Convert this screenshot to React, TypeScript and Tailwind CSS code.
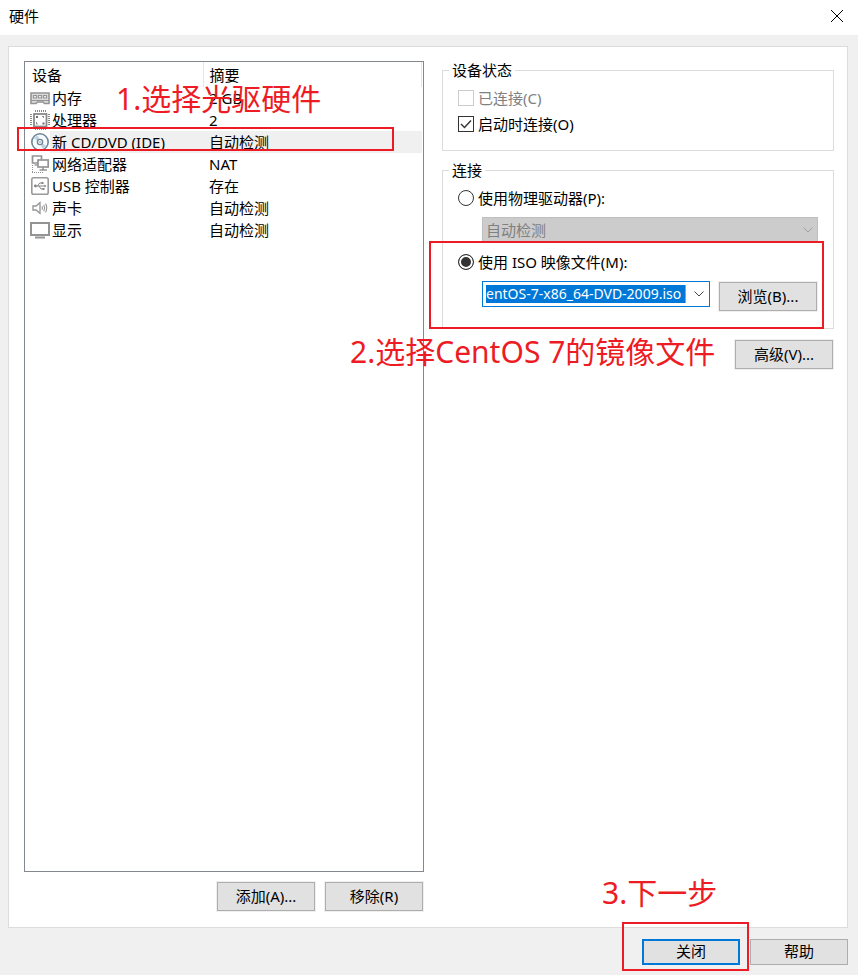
import type { ReactNode, SVGProps } from 'react';

function MemoryIcon() {
  return (
    <svg width="20" height="20" viewBox="0 0 20 20" fill="none" stroke="#949494" aria-hidden="true">
      <path d="M1 5h18v10.5h-4.5L13 14H7.5L6 15.5H1z" fill="#dcdcdc" strokeWidth="1.6" />
      <path d="M1 12.5h18" />
      <path d="M3.5 7.5h3v2.5h-3zM8.5 7.5h3v2.5h-3zM13.5 7.5h3v2.5h-3z" fill="#f4f4f4" strokeWidth="1.2" />
    </svg>
  );
}

function CpuIcon() {
  return (
    <svg width="20" height="20" viewBox="0 0 20 20" fill="none" stroke="#8a8a8a" aria-hidden="true">
      <path d="M5.5 0v2M7.5 0v2M9.5 0v2M11.5 0v2M13.5 0v2M15.5 0v2" />
      <path d="M5.5 18v2M7.5 18v2M9.5 18v2M11.5 18v2M13.5 18v2M15.5 18v2" />
      <path d="M0 4.5h2M0 6.5h2M0 8.5h2M0 10.5h2M0 12.5h2M0 14.5h2" />
      <path d="M18 4.5h2M18 6.5h2M18 8.5h2M18 10.5h2M18 12.5h2M18 14.5h2" />
      <rect x="4" y="4" width="12.5" height="12.5" strokeWidth="1.8" fill="#fff" />
      <path d="M6 6h2v2H6zM12.5 12.5h2v2h-2z" fill="#6c6c6c" stroke="none" />
      <path d="M12 6.5h2M13.5 6v2M6.5 12v2M6 14h2" strokeWidth=".9" />
    </svg>
  );
}

function DiscIcon() {
  return (
    <svg width="20" height="20" viewBox="0 0 20 20" fill="none" stroke="#6b8799" aria-hidden="true">
      <circle cx="10" cy="10" r="8.2" strokeWidth="1.6" fill="#f7fbfd" />
      <path d="M10 10 4 6.5A7 7 0 0 1 8 3.4zM10 10l6 3.5a7 7 0 0 1-4 3.1z" fill="#bcd3e2" stroke="none" />
      <circle cx="10" cy="10" r="2.6" strokeWidth="1.4" fill="#fff" />
      <circle cx="10" cy="10" r=".8" fill="#6b8799" stroke="none" />
    </svg>
  );
}

function NetworkIcon() {
  return (
    <svg width="20" height="20" viewBox="0 0 20 20" fill="none" stroke="#949494" aria-hidden="true">
      <path d="M8 9H2.5V2h9v3.5" strokeWidth="1.7" />
      <path d="M4.5 11h3" strokeWidth="1.4" />
      <rect x="8" y="6" width="10.2" height="7" strokeWidth="1.7" fill="#fff" />
      <path d="M13 13v3M9.5 16h7.5" strokeWidth="1.6" />
      <path d="M2.5 11v7M2 18.5h12" strokeDasharray="1 1" />
    </svg>
  );
}

function UsbIcon() {
  return (
    <svg width="20" height="20" viewBox="0 0 20 20" fill="none" stroke="#9a9a9a" aria-hidden="true">
      <rect x="1.8" y="1.8" width="16.4" height="16.4" rx="1.8" strokeWidth="1.6" />
      <path d="M6 10h9M7.5 10 9.7 7H12M9 10l2 3h2" stroke="#858585" />
      <circle cx="5.4" cy="10" r="1.4" fill="#858585" stroke="none" />
      <path d="M11.5 6h2v2h-2zM12.5 12h2v2h-2zM14.5 8.5l2 1.5-2 1.5z" fill="#858585" stroke="none" />
    </svg>
  );
}

function SoundIcon() {
  return (
    <svg width="20" height="20" viewBox="0 0 20 20" fill="none" stroke="#949494" strokeWidth="1.3" aria-hidden="true">
      <path d="M3 8h3l4-3.3v10.6L6 12H3z" />
      <path d="M12 8.3q.8 1.7 0 3.4M13.8 6.8q1.6 3.2 0 6.4M15.6 5.5q2.2 4.5 0 9" strokeWidth="1.1" />
    </svg>
  );
}

function DisplayIcon() {
  return (
    <svg width="20" height="20" viewBox="0 0 20 20" fill="none" stroke="#949494" aria-hidden="true">
      <rect x="1" y="3" width="18" height="12" strokeWidth="2" />
      <path d="M5 17.5h10" strokeWidth="2" />
    </svg>
  );
}

function Chevron(props: SVGProps<SVGSVGElement>) {
  return (
    <svg width="10" height="6" viewBox="0 0 10 6" fill="none" stroke="currentColor" aria-hidden="true" {...props}>
      <path d="M.5.5 5 5 9.5.5" />
    </svg>
  );
}

const devices = [
  { name: '内存', summary: '2 GB', Icon: MemoryIcon },
  { name: '处理器', summary: '2', Icon: CpuIcon },
  { name: '新 CD/DVD (IDE)', summary: '自动检测', Icon: DiscIcon, selected: true },
  { name: '网络适配器', summary: 'NAT', Icon: NetworkIcon },
  { name: 'USB 控制器', summary: '存在', Icon: UsbIcon },
  { name: '声卡', summary: '自动检测', Icon: SoundIcon },
  { name: '显示', summary: '自动检测', Icon: DisplayIcon },
];

function PushButton({ children, className = 'h-[29px] border border-[#adadad] shadow-[0_0_0_1px_#f0f0f0]' }: { children: ReactNode; className?: string }) {
  return (
    <button type="button" className={`w-[98px] shrink-0 bg-[#e1e1e1] pb-0.5 leading-5 ${className}`}>
      {children}
    </button>
  );
}

function Group({ title, children, className }: { title: string; children: ReactNode; className: string }) {
  return (
    <fieldset className={`min-w-0 border border-[#dcdcdc] pr-[15px] pl-[15px] pt-1.5 ${className}`}>
      <legend className="-ml-[9px] h-[18px] px-[3px] leading-[18px]">{title}</legend>
      {children}
    </fieldset>
  );
}

function Note({ children, className }: { children: ReactNode; className: string }) {
  return (
    <p className={`pointer-events-none absolute z-10 text-[30px] leading-10 whitespace-nowrap text-[#ed1c24] ${className}`}>
      {children}
    </p>
  );
}

function Frame({ className }: { className: string }) {
  return <div className={`pointer-events-none absolute z-10 border-2 border-[#ed1c24] ${className}`} />;
}

const check = 'size-4 shrink-0 appearance-none border border-[#333] bg-white disabled:border-[#ccc]';
const radio =
  'size-4 shrink-0 appearance-none rounded-full border border-[#333] bg-white checked:bg-[#333] checked:shadow-[inset_0_0_0_2px_#fff]';

export default function App() {
  return (
    <div className="flex min-h-screen flex-col bg-[#f0f0f0] font-['Noto_Sans','Noto_Sans_CJK_SC',sans-serif] text-[15px] text-black">
      <header className="flex h-[35px] items-center justify-between bg-white pr-[15px] pl-[9px]">
        <h1 className="pb-1 leading-5">硬件</h1>
        <button type="button" aria-label="关闭窗口" className="pb-1">
          <svg width="12" height="12" viewBox="0 0 12 12" fill="none" stroke="#000" aria-hidden="true">
            <path d="m0 0 12 12M12 0 0 12" />
          </svg>
        </button>
      </header>

      <main className="mt-[11px] mr-2.5 ml-2 flex flex-1 gap-[18px] border border-[#dcdcdc] bg-white pt-3.5 pr-[13px] pb-4 pl-[15px]">
        <section className="relative flex w-[400px] shrink-0 flex-col">
          <div className="flex-1 border border-[#828790] pr-px">
            <table className="w-full table-fixed border-collapse text-left leading-[22px]">
              <colgroup>
                <col className="w-[25px]" />
                <col className="w-[153px]" />
                <col />
              </colgroup>
              <thead>
                <tr className="h-[25px]">
                  <th colSpan={2} className="border-r border-[#e5e5e5] p-0 pl-[7px] font-normal">设备</th>
                  <th className="border-r border-[#e5e5e5] p-0 pl-1.5 font-normal">摘要</th>
                </tr>
              </thead>
              <tbody>
                {devices.map(({ name, summary, Icon, selected }) => (
                  <tr key={name} className="h-[22px]">
                    <td className="p-0 pl-[5px]"><Icon /></td>
                    <td className={`p-0 pl-0.5 whitespace-nowrap ${selected ? 'bg-[#f0f0f0]' : ''}`}>{name}</td>
                    <td className={`p-0 pl-1.5 ${selected ? 'bg-[#f0f0f0]' : ''}`}>{summary}</td>
                  </tr>
                ))}
              </tbody>
            </table>
          </div>
          <div className="mt-2.5 flex justify-end gap-2.5 pr-px">
            <PushButton>添加(A)...</PushButton>
            <PushButton>移除(R)</PushButton>
          </div>
          <Frame className="top-[66px] -left-[7px] h-6 w-[377px]" />
          <Note className="top-[18px] left-[92px]">1.选择光驱硬件</Note>
        </section>

        <section className="relative flex min-w-0 flex-1 flex-col">
          <Group title="设备状态" className="pb-[13px]">
            <label className="flex h-[26px] items-center gap-1 text-[#808080]">
              <input type="checkbox" disabled className={check} />
              已连接(C)
            </label>
            <label className="flex h-[26px] items-center gap-1">
              <span className="relative flex">
                <input type="checkbox" defaultChecked className={check} />
                <svg className="pointer-events-none absolute inset-0" width="16" height="16" viewBox="0 0 16 16" fill="none" stroke="#333" strokeWidth="1.4" aria-hidden="true">
                  <path d="m3 8 3.5 3.5 6.5-7" />
                </svg>
              </span>
              启动时连接(O)
            </label>
          </Group>

          <div className="relative mt-2.5">
            <Group title="连接" className="pb-[17px]">
              <label className="flex h-[26px] items-center gap-1">
                <input type="radio" name="source" className={radio} />
                使用物理驱动器(P):
              </label>
              <div className="relative mt-1.5 ml-6 text-[#808080]">
                <select disabled aria-label="物理驱动器" className="block h-[26px] w-full appearance-none border border-[#bfbfbf] bg-[#ccc] pl-[3px] opacity-100">
                  <option>自动检测</option>
                </select>
                <Chevron className="pointer-events-none absolute top-2.5 right-[5px] text-[#a0a0a0]" />
              </div>
              <label className="mt-1.5 flex h-[26px] items-center gap-1">
                <input type="radio" name="source" defaultChecked className={radio} />
                使用 ISO 映像文件(M):
              </label>
              <div className="mt-1.5 ml-6 flex items-start gap-[9px] pr-px">
                <div className="flex h-[26px] min-w-0 flex-1 items-center border border-[#0078d7] pr-[5px] pl-[3px]">
                  <input
                    aria-label="ISO 映像文件"
                    defaultValue="entOS-7-x86_64-DVD-2009.iso"
                    className="h-[18px] min-w-0 flex-1 border-r border-[#ff8728] bg-[#0078d7] text-[14px] leading-[18px] text-white"
                  />
                  <button type="button" aria-label="展开" className="ml-2 text-[#444]"><Chevron /></button>
                </div>
                <PushButton className="mt-px h-[29px] border border-[#adadad] shadow-[0_0_0_1px_#f0f0f0]">浏览(B)...</PushButton>
              </div>
            </Group>
            <Frame className="top-20 right-2.5 -left-[13px] h-[88px]" />
          </div>

          <div className="mt-[11px] flex justify-end pr-px">
            <PushButton>高级(V)...</PushButton>
          </div>
          <Note className="top-[271px] -left-[92px]">2.选择CentOS 7的镜像文件</Note>
        </section>
      </main>

      <footer className="flex justify-end gap-2.5 pt-[11px] pr-2.5 pb-2.5">
        <div className="relative flex">
          <PushButton className="h-[26px] border-2 border-[#0078d7]">关闭</PushButton>
          <Frame className="-top-[17px] -left-5 h-[49px] w-[127px]" />
          <Note className="-top-[66px] -left-10">3.下一步</Note>
        </div>
        <PushButton className="h-[26px] border border-[#adadad]">帮助</PushButton>
      </footer>
    </div>
  );
}
